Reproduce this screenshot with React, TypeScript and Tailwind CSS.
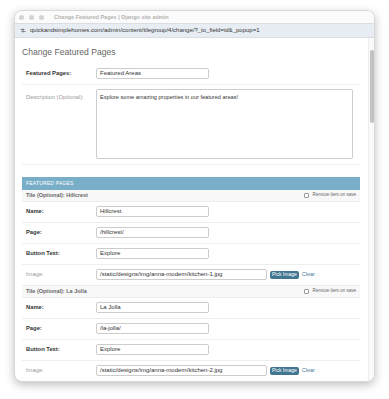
import React from "react";

const font = { fontFamily: '"Liberation Sans", Arial, sans-serif' };

function Input({ value, w }: { value: string; w: string }) {
  return (
    <div
      className={`${w} h-[11px] border border-[#cccccc] rounded-[2px] bg-white flex items-center pl-[3px] text-[6px] text-[#333] overflow-hidden whitespace-nowrap`}
    >
      {value}
    </div>
  );
}

function Row({
  label,
  muted,
  children,
}: {
  label: string;
  muted?: boolean;
  children: React.ReactNode;
}) {
  return (
    <div className="flex items-center px-[4px] pt-[4px] pb-[5px] border-b border-[#eeeeee]">
      <div
        className={`w-[70px] text-[5.8px] ${muted ? "text-[#999] font-normal" : "text-[#333] font-bold"}`}
      >
        {label}
      </div>
      {children}
    </div>
  );
}

function Tile({ name, page, img }: { name: string; page: string; img: string }) {
  return (
    <div>
      <div className="h-[12px] bg-[#f8f8f8] border-b border-[#eeeeee] flex items-center justify-between px-[4px]">
        <span className="text-[5.5px] font-bold text-[#666]">Tile (Optional): {name}</span>
        <span className="flex items-center gap-[3px] text-[4.5px] text-[#666]">
          <span className="w-[5px] h-[5px] border border-[#999] rounded-[1px] bg-white" />
          Remove item on save
        </span>
      </div>
      <Row label="Name:">
        <Input value={name} w="w-[113px]" />
      </Row>
      <Row label="Page:">
        <Input value={page} w="w-[113px]" />
      </Row>
      <Row label="Button Text:">
        <Input value="Explore" w="w-[113px]" />
      </Row>
      <Row label="Image:" muted>
        <Input value={img} w="w-[171px]" />
        <div className="ml-[3px] h-[8px] px-[2px] rounded-[2px] bg-[#417690] text-white text-[5px] flex items-center whitespace-nowrap">
          Pick Image
        </div>
        <span className="ml-[3px] text-[5.5px] text-[#447e9b]">Clear</span>
      </Row>
    </div>
  );
}

export default function App() {
  return (
    <div className="w-[389px] h-[399px] bg-white pt-[10px] pl-[14px]" style={font}>
      <div className="w-[361px] h-[372px] rounded-[8px] overflow-hidden bg-white shadow-[0_3px_10px_rgba(0,0,0,0.25)] border border-[#d8d8d8] flex flex-col">
        {/* title bar */}
        <div className="h-[12px] bg-[#fbfbfb] flex items-center pl-[4px] shrink-0">
          <div className="flex gap-[5px]">
            <span className="w-[5px] h-[5px] rounded-full bg-[#d4d4d4]" />
            <span className="w-[5px] h-[5px] rounded-full bg-[#d4d4d4]" />
            <span className="w-[5px] h-[5px] rounded-full bg-[#d4d4d4]" />
          </div>
          <span className="ml-[10px] text-[5.5px] font-bold text-[#b3b3b3]">
            Change Featured Pages | Django site admin
          </span>
        </div>
        {/* address bar */}
        <div className="h-[15px] bg-[#e8edf3] border-y border-[#d9dee5] flex items-center pl-[5px] shrink-0">
          <svg width="6" height="5" viewBox="0 0 12 10" fill="none" stroke="#555" strokeWidth="1.4">
            <path d="M1 3h7M6 1l2 2-2 2" />
            <path d="M11 7H4M6 5L4 7l2 2" />
          </svg>
          <span className="ml-[4px] text-[6px] text-[#333]">
            quickandsimplehomes.com/admin/content/tilegroup/4/change/?_to_field=id&amp;_popup=1
          </span>
        </div>
        {/* body */}
        <div className="flex flex-1 overflow-hidden">
          <div className="flex-1 pl-[7px] pr-[8px] pt-[8px] overflow-hidden">
            <h1 className="text-[8.6px] leading-[12px] text-[#666] mb-[6px]">Change Featured Pages</h1>
            <Row label="Featured Pages:">
              <Input value="Featured Areas" w="w-[113px]" />
            </Row>
            <div className="flex items-start px-[4px] pt-[4px] pb-[5px] border-b border-[#eeeeee]">
              <div className="w-[70px] pt-[4px] text-[5.8px] text-[#999]">Description (Optional):</div>
              <div className="w-[257px] h-[70px] border border-[#cccccc] rounded-[2px] px-[3px] pt-[3px] text-[5.6px] text-[#333]">
                Explore some amazing properties in our featured areas!
              </div>
            </div>
            <div className="mt-[12px]">
              <div className="h-[13px] bg-[#79aec8] flex items-center px-[4px] text-[5px] text-white tracking-[0.2px]">
                FEATURED PAGES
              </div>
              <Tile name="Hillcrest" page="/hillcrest/" img="/static/designs/img/anna-modern/kitchen-1.jpg" />
              <Tile name="La Jolla" page="/la-jolla/" img="/static/designs/img/anna-modern/kitchen-2.jpg" />
            </div>
          </div>
          <div className="w-[6px] shrink-0 border-l border-[#eeeeee] bg-[#fafafa] pt-[12px] flex justify-center">
            <div className="w-[4px] h-[73px] rounded-full bg-[#c2c2c2]" />
          </div>
        </div>
      </div>
    </div>
  );
}
